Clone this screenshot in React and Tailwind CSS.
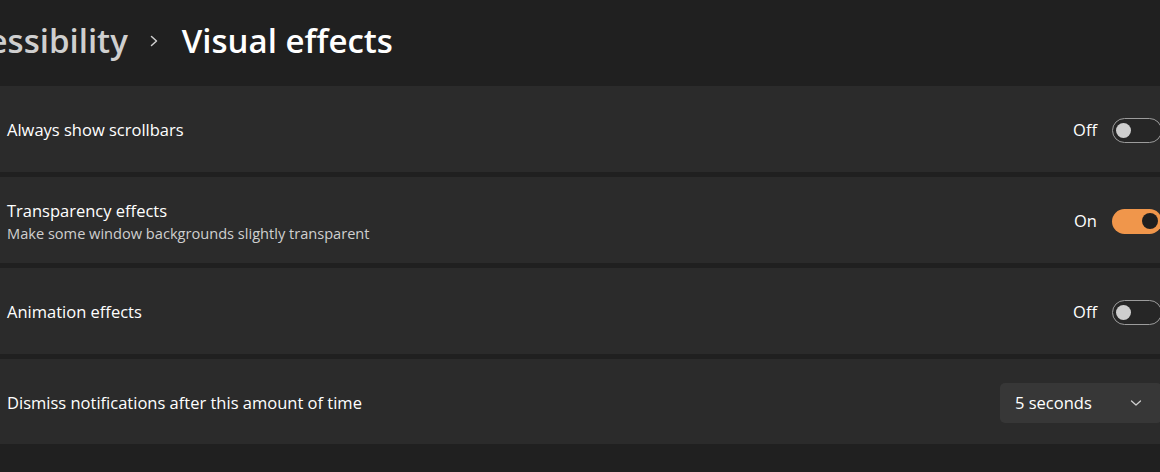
import React from 'react';

const font = { fontFamily: '"Open Sans", "Noto Sans", sans-serif' };

const Toggle = ({ on }) => {
  if (on) {
    return (
      <div className="w-[50px] h-[25px] rounded-full bg-[#f0964b] flex items-center justify-end pr-[4px]">
        <div className="w-[16px] h-[16px] rounded-full bg-[#1f1f1f]"></div>
      </div>
    );
  }
  return (
    <div className="w-[50px] h-[25px] rounded-full border border-[#9c9c9c] bg-[#262626] flex items-center pl-[3px]">
      <div className="w-[15px] h-[15px] rounded-full bg-[#cecece]"></div>
    </div>
  );
};

const ToggleRow = ({ title, subtitle, on }) => (
  <div className="h-[86px] bg-[#2b2b2b] flex items-center justify-between pl-[7px] pr-[18px] pt-[2px]">
    <div className="flex flex-col">
      <span className="text-[16.5px] leading-[24px] text-white">{title}</span>
      {subtitle && (
        <span className="text-[14.6px] leading-[20px] text-[#cfcfcf]">{subtitle}</span>
      )}
    </div>
    <div className="flex items-center gap-[15px]">
      <span className="text-[16.5px] text-white">{on ? 'On' : 'Off'}</span>
      <Toggle on={on} />
    </div>
  </div>
);

export default function App() {
  return (
    <div className="w-[1160px] h-[472px] overflow-hidden bg-[#202020]" style={font}>
      <div className="w-[1180px]">
        {/* breadcrumb header */}
        <div className="h-[86px] flex items-center ml-[-66px] pb-[4px]">
          <span className="text-[33px] font-semibold text-[#cfcfcf] whitespace-nowrap">Accessibility</span>
          <svg className="ml-[20px] mr-[22px]" width="12" height="14" viewBox="0 0 12 14">
            <path d="M3.5 2.5 L8.5 7 L3.5 11.5" fill="none" stroke="#cfcfcf" strokeWidth="1.5" strokeLinecap="round" strokeLinejoin="round" />
          </svg>
          <span className="text-[33px] font-semibold text-white whitespace-nowrap">Visual effects</span>
        </div>

        <div className="flex flex-col gap-[5px]">
          <ToggleRow title="Always show scrollbars" on={false} />
          <ToggleRow
            title="Transparency effects"
            subtitle="Make some window backgrounds slightly transparent"
            on={true}
          />
          <ToggleRow title="Animation effects" on={false} />

          <div className="h-[85px] bg-[#2b2b2b] flex items-center justify-between pl-[7px] pr-[18px] pt-[3px]">
            <span className="text-[16.5px] text-white">Dismiss notifications after this amount of time</span>
            <div className="w-[162px] h-[40px] rounded-[5px] bg-[#373737] flex items-center justify-between pl-[15px] pr-[20px]">
              <span className="text-[16.5px] text-white">5 seconds</span>
              <svg width="12" height="8" viewBox="0 0 12 8">
                <path d="M1.5 2 L6 6 L10.5 2" fill="none" stroke="#cfcfcf" strokeWidth="1.3" strokeLinecap="round" strokeLinejoin="round" />
              </svg>
            </div>
          </div>
        </div>
      </div>
    </div>
  );
}
